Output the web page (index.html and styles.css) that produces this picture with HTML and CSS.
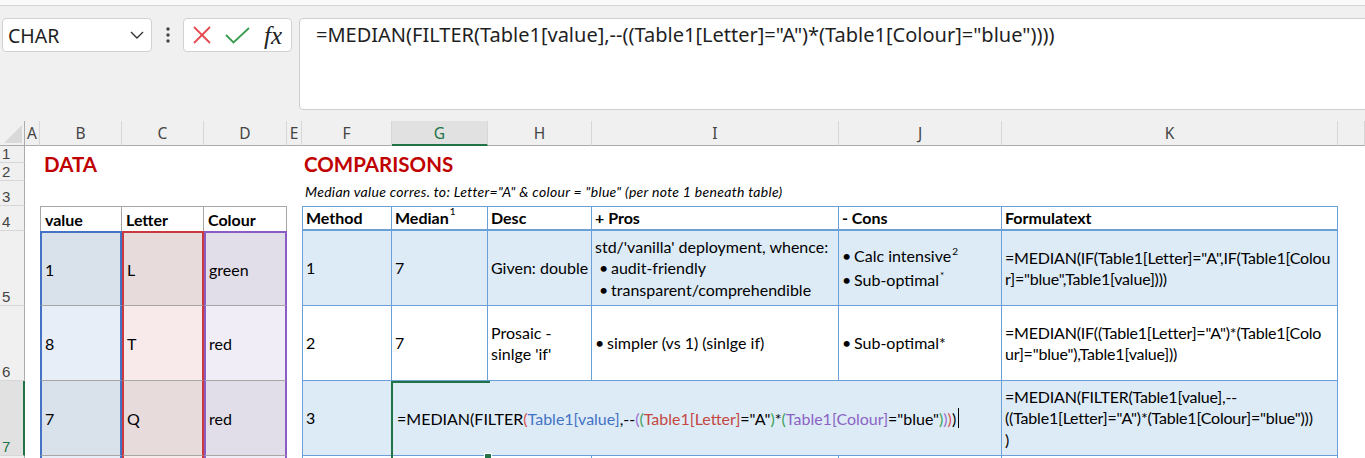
FILE: index.html
```html
<!DOCTYPE html>
<html>
<head>
<meta charset="utf-8">
<title>Sheet</title>
<link rel="stylesheet" href="styles.css">
</head>
<body>
<div class="topstrip"></div>
<div class="fbar">
  <div class="namebox"><span>CHAR</span><svg class="chev" width="14" height="8" viewBox="0 0 14 8"><polyline points="1,1 7,7 13,1"/></svg></div>
  <div class="vdots"><svg width="4" height="16" viewBox="0 0 4 16"><circle cx="2" cy="2" r="1.7"/><circle cx="2" cy="8" r="1.7"/><circle cx="2" cy="14" r="1.7"/></svg></div>
  <div class="btns">
    <svg class="ic-x" width="18" height="18" viewBox="0 0 18 18"><line x1="1" y1="1" x2="17" y2="17"/><line x1="17" y1="1" x2="1" y2="17"/></svg>
    <svg class="ic-ok" width="25" height="17" viewBox="0 0 25 17"><polyline points="1,8 8.5,15.5 24,1"/></svg>
    <span class="fx">fx</span>
  </div>
  <div class="finput">=MEDIAN(FILTER(Table1[value],--((Table1[Letter]="A")*(Table1[Colour]="blue"))))</div>
</div>

<div class="sheet">
  <div class="corner"><svg width="18" height="18" viewBox="0 0 18 18"><polygon points="0,18 18,0 18,18"/></svg></div>
  <div class="ch cA">A</div>
  <div class="ch cB">B</div>
  <div class="ch cC">C</div>
  <div class="ch cD">D</div>
  <div class="ch cE">E</div>
  <div class="ch cF">F</div>
  <div class="ch cG sel">G</div>
  <div class="ch cH">H</div>
  <div class="ch cI">I</div>
  <div class="ch cJ">J</div>
  <div class="ch cK">K</div>
  <div class="ch cL"></div>

  <div class="rh r1">1</div>
  <div class="rh r2">2</div>
  <div class="rh r3">3</div>
  <div class="rh r4">4</div>
  <div class="rh r5">5</div>
  <div class="rh r6">6</div>
  <div class="rh r7 sel">7</div>
  <div class="rh r8"></div>

  <div class="title t-data">DATA</div>
  <div class="title t-comp">COMPARISONS</div>
  <div class="note cF r3">Median value corres. to: Letter="A" &amp; colour = "blue" (per note 1 beneath table)</div>

  <!-- data table -->
  <div class="dh cB r4 first">value</div>
  <div class="dh cC r4">Letter</div>
  <div class="dh cD r4">Colour</div>

  <div class="dv vB cB r5 top dark">1</div>
  <div class="dv vC cC r5 top dark">L</div>
  <div class="dv vD cD r5 top dark">green</div>

  <div class="dv vB cB r6 light">8</div>
  <div class="dv vC cC r6 light">T</div>
  <div class="dv vD cD r6 light">red</div>

  <div class="dv vB cB r7 dark">7</div>
  <div class="dv vC cC r7 dark">Q</div>
  <div class="dv vD cD r7 dark">red</div>

  <div class="dv vB cB r8 light"></div>
  <div class="dv vC cC r8 light"></div>
  <div class="dv vD cD r8 light"></div>

  <!-- comparisons table -->
  <div class="cc hh cF r4 first">Method</div>
  <div class="cc hh cG r4">Median<sup class="sp">1</sup></div>
  <div class="cc hh cH r4">Desc</div>
  <div class="cc hh cI r4">+ Pros</div>
  <div class="cc hh cJ r4">- Cons</div>
  <div class="cc hh cK r4">Formulatext</div>

  <div class="cc cF r5 first bl">1</div>
  <div class="cc cG r5 bl">7</div>
  <div class="cc cH r5 bl">Given: double</div>
  <div class="cc cI r5 bl"><div>std/'vanilla' deployment, whence:<br><span class="ind"><span class="bul">•</span>audit-friendly</span><br><span class="ind"><span class="bul">•</span>transparent/comprehendible</span></div></div>
  <div class="cc cJ r5 bl"><div class="tall"><span class="bul">•</span>Calc intensive<sup class="sp">2</sup><br><span class="bul">•</span>Sub-optimal<sup class="sp">*</sup></div></div>
  <div class="cc cK r5 bl"><div>=MEDIAN(IF(Table1[Letter]="A",IF(Table1[Colou<br>r]="blue",Table1[value])))</div></div>

  <div class="cc cF r6 first">2</div>
  <div class="cc cG r6">7</div>
  <div class="cc cH r6"><div>Prosaic -<br>sinlge 'if'</div></div>
  <div class="cc cI r6"><span class="bul">•</span>simpler (vs 1) (sinlge if)</div>
  <div class="cc cJ r6"><span class="bul">•</span>Sub-optimal*</div>
  <div class="cc cK r6"><div>=MEDIAN(IF((Table1[Letter]="A")*(Table1[Colo<br>ur]="blue"),Table1[value]))</div></div>

  <div class="cc cF r7 first bl">3</div>
  <div class="editor r7">=MEDIAN(FILTER<span class="p2">(</span><span class="rb">Table1[value]</span>,--<span class="p3">(</span><span class="p4">(</span><span class="rr">Table1[Letter]</span>="A"<span class="p4">)</span>*<span class="p4">(</span><span class="rp">Table1[Colour]</span>="blue"<span class="p4">)</span><span class="p3">)</span><span class="p2">)</span>)<span class="caret"></span></div>
  <div class="cc cK r7 bl"><div>=MEDIAN(FILTER(Table1[value],--<br>((Table1[Letter]="A")*(Table1[Colour]="blue")))<br>)</div></div>

  <div class="cc cF r8 first"></div>
  <div class="cc cG r8"></div>
  <div class="cc cH r8"></div>
  <div class="cc cI r8"></div>
  <div class="cc cJ r8"></div>
  <div class="cc cK r8"></div>
</div>
</body>
</html>
```

FILE: styles.css
```css
* { box-sizing: border-box; }
html, body { margin: 0; padding: 0; }
body {
  background: #f0f0f0;
  width: 1365px;
  height: 458px;
  overflow: hidden;
  font-family: "Noto Sans", sans-serif;
  color: #1f1f1f;
}

/* ---------- formula bar ---------- */
.topstrip { height: 6px; background: #fafafa; border-bottom: 1px solid #d6d6d6; }
.fbar { display: flex; align-items: flex-start; height: 115px; padding: 12px 0 0 2px; }
.namebox {
  flex: none; width: 150px; height: 34px;
  border: 1px solid #d1d1d1; border-radius: 4px; background: #fff;
  display: flex; align-items: center; justify-content: space-between;
  padding: 0 7px 0 5px; font-size: 19.5px;
}
.chev polyline { fill: none; stroke: #333; stroke-width: 1.4; }
.vdots { flex: none; width: 10px; height: 34px; margin-left: 11px; display: flex; align-items: center; justify-content: center; }
.vdots circle { fill: #444; }
.btns {
  flex: none; margin-left: 10px; width: 109px; height: 34px;
  border: 1px solid #d1d1d1; border-radius: 4px; background: #fff;
  display: flex; align-items: center; padding-left: 9px;
}
.ic-x line { stroke: #e5484d; stroke-width: 1.8; }
.ic-ok { margin-left: 14px; }
.ic-ok polyline { fill: none; stroke: #3a9d4e; stroke-width: 1.8; }
.fx { margin-left: 14px; font-family: "Liberation Serif", serif; font-style: italic; font-size: 25px; line-height: 1; color: #222; }
.finput {
  flex: none; width: 1080px; height: 92px; margin-left: 7px;
  border: 1px solid #cfcfcf; border-radius: 4px; background: #fff;
  padding: 3px 0 0 16px; font-size: 20px; line-height: 26px; white-space: nowrap;
}

/* ---------- sheet grid ---------- */
.sheet {
  display: grid;
  grid-template-columns: 25px 15px 82px 82px 83px 15px 90px 96px 104px 247px 163px 336px 1fr;
  grid-template-rows: 25px 17px 18px 25px 25px 75px 75px 75px 2px;
  height: 337px;
  background: #fff;
  font-family: Lato, sans-serif;
  font-size: 16px;
  color: #000;
}
.cA { grid-column: 2; } .cB { grid-column: 3; } .cC { grid-column: 4; } .cD { grid-column: 5; }
.cE { grid-column: 6; } .cF { grid-column: 7; } .cG { grid-column: 8; } .cH { grid-column: 9; }
.cI { grid-column: 10; } .cJ { grid-column: 11; } .cK { grid-column: 12; } .cL { grid-column: 13; }
.r1 { grid-row: 2; } .r2 { grid-row: 3; } .r3 { grid-row: 4; } .r4 { grid-row: 5; }
.r5 { grid-row: 6; } .r6 { grid-row: 7; } .r7 { grid-row: 8; } .r8 { grid-row: 9; }

.corner {
  grid-row: 1; grid-column: 1; background: #f0f0f0;
  border-right: 1px solid #ababab; border-bottom: 1px solid #ababab;
  display: flex; align-items: flex-end; justify-content: flex-end; padding: 0 2px 2px 0;
}
.corner polygon { fill: #d9d9d9; }
.ch {
  grid-row: 1; background: #f0f0f0;
  border-right: 1px solid #d7d7d7; border-bottom: 1px solid #ababab;
  display: flex; align-items: center; justify-content: center;
  font-family: "Noto Sans", sans-serif; font-size: 15.5px; color: #444;
}
.ch.sel { background: #e1e1e1; color: #217346; border-bottom: 2px solid #217346; }
.rh {
  grid-column: 1; background: #f0f0f0;
  border-right: 1px solid #ababab; border-bottom: 1px solid #d7d7d7;
  display: flex; align-items: flex-end; padding: 0 0 2.5px 2px;
  font-family: "Liberation Sans", sans-serif; font-size: 15px; line-height: 13px; color: #444;
}
.rh.sel { background: #e1e1e1; color: #217346; border-right: 2px solid #217346; }
.rh.r8 { border-bottom: 0; padding: 0; }

.title {
  grid-row: 2 / 4; align-self: end;
  font-weight: 700; color: #c00000; font-size: 20.5px; line-height: 24px;
  padding-bottom: 5px; white-space: nowrap;
}
.t-data { grid-column: 3 / 6; padding-left: 4px; }
.t-comp { grid-column: 7 / 13; padding-left: 2px; }
.note {
  grid-column: 7 / 13; align-self: end;
  font-style: italic; font-size: 14px; letter-spacing: 0.3px; line-height: 16px;
  padding: 0 0 6px 3px; white-space: nowrap;
}

/* ---------- data table ---------- */
.dh {
  border-top: 1px solid #a6a6a6; border-right: 1px solid #a6a6a6;
  font-weight: 700; display: flex; align-items: center; padding-left: 4px;
}
.dh.first { border-left: 1px solid #a6a6a6; }
.dv {
  display: flex; align-items: center; padding-left: 3px;
  border-bottom: 1px solid #a6a6a6;
}
.vB { border-left: 2px solid #4472c4; border-right: 2px solid #4472c4; }
.vC { border-left: 2px solid #c9393e; border-right: 2px solid #c9393e; }
.vD { border-left: 2px solid #8a5cc4; border-right: 2px solid #8a5cc4; }
.vB.top { border-top: 2px solid #4472c4; }
.vC.top { border-top: 2px solid #c9393e; }
.vD.top { border-top: 2px solid #8a5cc4; }
.vB.dark { background: #d9e1ea; } .vB.light { background: #e8eef8; }
.vC.dark { background: #e8dbdc; } .vC.light { background: #f8eaea; }
.vD.dark { background: #e2dee9; } .vD.light { background: #f0edf7; }
.r8.dv { border-bottom: 0; }

/* ---------- comparisons table ---------- */
.cc {
  border-right: 1px solid #6a9fd8; border-bottom: 1px solid #6a9fd8;
  display: flex; align-items: center; padding: 0 3px;
  line-height: 21.5px; white-space: nowrap;
}
.cc.first { border-left: 1px solid #6a9fd8; }
.cc.hh { border-top: 1px solid #6a9fd8; border-bottom: 2px solid #6a9fd8; font-weight: 700; }
.cc.bl { background: #ddebf7; }
.cc.r8 { border-bottom: 0; }
.cK { letter-spacing: -0.2px; }
.cc.hh.cK { letter-spacing: 0; }
.sp { font-size: 10px; font-weight: 400; line-height: 0; vertical-align: 0; position: relative; top: -7px; margin-left: 1px; }
.ind { padding-left: 4px; }
.bul { display: inline-block; width: 12px; }
.tall { line-height: 24px; }

.editor {
  grid-column: 8 / 12;
  background: #ddebf7;
  border-right: 1px solid #6a9fd8; border-bottom: 1px solid #6a9fd8;
  position: relative;
  display: flex; align-items: center;
  padding-left: 5px; white-space: nowrap;
}
.editor::before {
  content: ""; position: absolute; left: -1px; top: 0;
  width: 97px; height: 76px;
  border: 2px solid #217346; border-right: 0;
}
.editor::after {
  content: ""; position: absolute; left: 92px; top: 72px;
  width: 6px; height: 6px; background: #217346; border: 1px solid #fff;
}
.p2 { color: #d9534f; }
.p3 { color: #9b6fd0; }
.p4 { color: #3aa35b; }
.rb { color: #4472c4; }
.rr { color: #c4473f; }
.rp { color: #8a63c4; }
.caret { display: inline-block; width: 1px; height: 20px; background: #000; margin-left: 2px; }
```
